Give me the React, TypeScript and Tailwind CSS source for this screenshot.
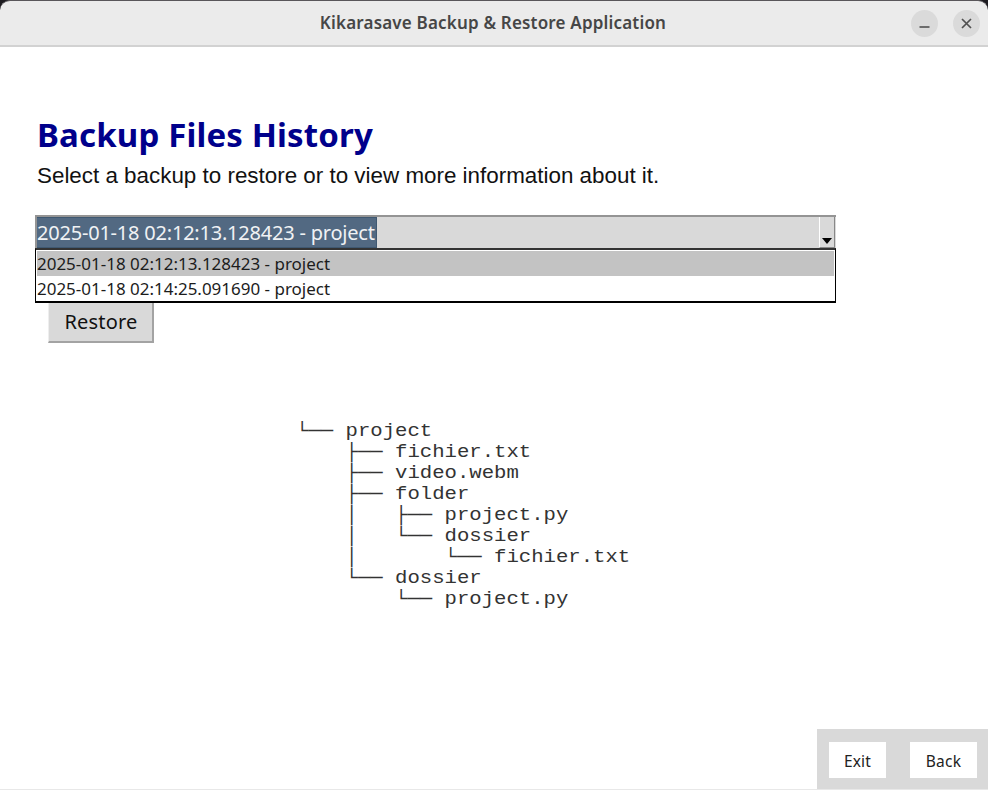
const tree = [
  "└── project",
  "    ├── fichier.txt",
  "    ├── video.webm",
  "    ├── folder",
  "    │   ├── project.py",
  "    │   └── dossier",
  "    │       └── fichier.txt",
  "    └── dossier",
  "        └── project.py",
];

function TitleBar() {
  return (
    <div className="bg-[#1d1b20]">
      <header className="grid h-[47px] grid-cols-[1fr_auto_1fr] items-center rounded-t-[10px] border-t border-b-2 border-t-[#59565a] border-b-[#d2d2d2] bg-[#ebebeb] pr-2">
        <div />
        <h1 className="pb-px pl-[6px] font-['Noto_Sans',sans-serif] text-[17px] leading-none font-semibold tracking-[0.18px] whitespace-nowrap text-[#464646]">
          Kikarasave Backup &amp; Restore Application
        </h1>
        <div className="flex justify-end gap-[15px]">
          <button className="flex size-[27px] items-center justify-center rounded-full bg-[#dadada]">
            <svg width="27" height="27" viewBox="0 0 27 27" stroke="#505050" strokeWidth="1.6">
              <path d="M8.5 17h10" />
            </svg>
          </button>
          <button className="flex size-[27px] items-center justify-center rounded-full bg-[#dadada]">
            <svg width="27" height="27" viewBox="0 0 27 27" stroke="#505050" strokeWidth="1.7">
              <path d="M9 9l9 9M18 9l-9 9" />
            </svg>
          </button>
        </div>
      </header>
    </div>
  );
}

function Option({ label, active = false }: { label: string; active?: boolean }) {
  return (
    <li className={`flex h-[25px] items-center ${active ? "bg-[#c3c3c3]" : "bg-white"}`}>
      <span className="origin-left scale-x-[1.095] pt-[3px]">{label}</span>
    </li>
  );
}

function BackupSelect() {
  return (
    <div className="w-[801px] font-['Noto_Sans',sans-serif]">
      <div className="flex h-[33px] border-t-2 border-l-2 border-[#949494] bg-[#d9d9d9] pr-px">
        <div className="flex h-[31px] w-[340px] items-center border border-l-0 border-[#3f5871] bg-[#526982] text-[20px] leading-none tracking-[-0.21px] whitespace-nowrap text-[#f0f2f4]">
          <span>2025-01-18 02:12:13.128423 - project</span>
        </div>
        <div className="flex-1" />
        <button className="flex w-4 items-end justify-center border-r border-b border-l border-r-[#888] border-b-[#888] border-l-white pb-[3px]">
          <svg width="10" height="6" viewBox="0 0 10 6">
            <path d="M0 0h10L5 6z" fill="#000" />
          </svg>
        </button>
      </div>
      <ul className="h-[55px] border-x border-t-2 border-b-2 border-t-[#333] border-r-black border-b-black border-l-black bg-white pt-px pr-px pl-px text-[15.5px] whitespace-nowrap text-[#1c1c1c]">
        <Option label="2025-01-18 02:12:13.128423 - project" active />
        <Option label="2025-01-18 02:14:25.091690 - project" />
      </ul>
    </div>
  );
}

export default function App() {
  return (
    <div className="flex h-[790px] w-[988px] flex-col overflow-hidden bg-white">
      <TitleBar />
      <main className="flex flex-1 flex-col items-start border-b border-[#e8e8e8]">
        <h2 className="mt-[66px] ml-[37px] font-['Noto_Sans',sans-serif] text-[33px] leading-[44px] font-bold tracking-[0.15px] whitespace-nowrap text-[#00008b]">
          Backup Files History
        </h2>
        <p className="ml-[37px] font-['Liberation_Sans',sans-serif] text-[22.4px] leading-[37px] whitespace-nowrap text-[#111]">
          Select a backup to restore or to view more information about it.
        </p>
        <div className="mt-[21px] ml-[35px]">
          <BackupSelect />
        </div>
        <button className="ml-12 flex h-10 w-[106px] items-center justify-center border-r-2 border-b-2 border-l border-r-[#a3a3a3] border-b-[#a3a3a3] border-l-[#eeeeee] bg-[#d9d9d9] pl-px font-['Noto_Sans',sans-serif] text-[20px] tracking-[0.2px] text-[#111]">
          Restore
        </button>
        <pre className="mt-[78px] ml-[296px] origin-left scale-x-[1.146] font-['Liberation_Mono',monospace] text-[18px] leading-[21.05px] text-[#333]">
          {tree.join("\n")}
        </pre>
        <footer className="mt-auto flex h-[60px] w-[171px] items-center gap-6 self-end bg-[#d9d9d9] pt-px pl-3 font-['Noto_Sans',sans-serif] text-[15.5px] tracking-[0.2px] text-[#222]">
          <button className="h-9 w-[57px] bg-white pt-1">Exit</button>
          <button className="h-9 w-[67px] bg-white pt-1">Back</button>
        </footer>
      </main>
    </div>
  );
}
